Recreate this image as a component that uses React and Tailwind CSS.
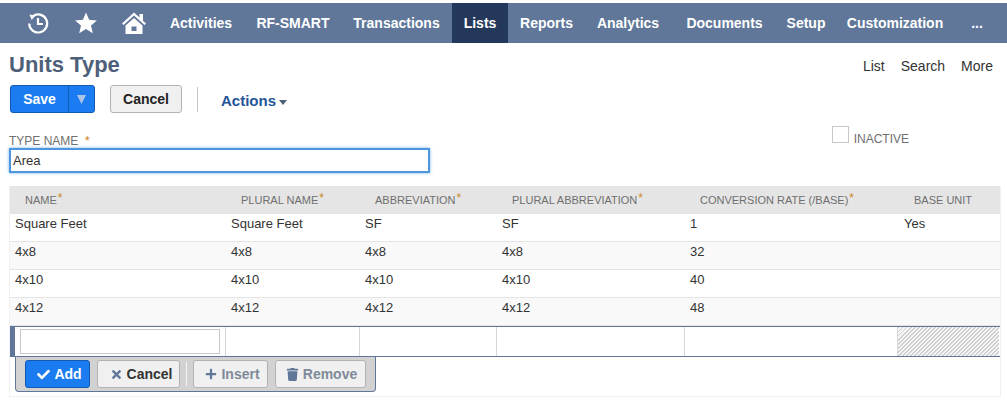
import React from "react";
import { FaCheck, FaTimes, FaPlus, FaTrash } from "react-icons/fa";

const cols = ["w-[216px]", "w-[134px]", "w-[137px]", "w-[188px]", "w-[213px]", "w-[102px]"];
const headers = [
  ["NAME", true, "pl-[15px]"],
  ["PLURAL NAME", true, "pl-[15px]"],
  ["ABBREVIATION", true, "pl-[15px]"],
  ["PLURAL ABBREVIATION", true, "pl-[15px]"],
  ["CONVERSION RATE (/BASE)", true, "pl-[15px]"],
  ["BASE UNIT", false, "pl-[16px]"],
];
const rows = [
  ["Square Feet", "Square Feet", "SF", "SF", "1", "Yes"],
  ["4x8", "4x8", "4x8", "4x8", "32", ""],
  ["4x10", "4x10", "4x10", "4x10", "40", ""],
  ["4x12", "4x12", "4x12", "4x12", "48", ""],
];
const nav = [
  ["Activities", "w-[88px]"],
  ["RF-SMART", "w-[96px]"],
  ["Transactions", "w-[111px]"],
  ["Lists", "w-[56px] bg-[#24385b]"],
  ["Reports", "w-[77px]"],
  ["Analytics", "w-[86px]"],
  ["Documents", "w-[107px]"],
  ["Setup", "w-[56px]"],
  ["Customization", "w-[122px]"],
];

function Star() {
  return <span className="text-[#cc8a1e] text-[12px] leading-none">*</span>;
}

export default function App() {
  return (
    <div className="w-[1007px] h-[410px] overflow-hidden bg-white pt-[3px] font-['Liberation_Sans',Arial,sans-serif] text-[#333]">
      <nav className="h-10 bg-[#607799] flex items-stretch pl-[17px] text-white text-[14px] font-bold">
        <div className="flex items-center w-[140px] shrink-0 text-white">
          <svg width="24" height="24" viewBox="0 0 24 24" className="ml-[9px]" fill="none" stroke="currentColor" strokeWidth="2.2">
            <path d="M6.5 5.5A9 9 0 1 1 3.2 12.5" />
            <path d="M3.5 3.5l6 1-3.8 4.400z" fill="currentColor" stroke="none" />
            <path d="M12 7v6h5" />
          </svg>
          <svg width="24" height="24" viewBox="0 0 24 24" className="ml-[24px]" fill="currentColor">
            <path d="M12 1.500l3.100 7.200 7.800.7-5.900 5.100 1.800 7.700L12 18.100l-6.800 4.100 1.800-7.700L1.100 9.400l7.800-.7z" />
          </svg>
          <svg width="26" height="24" viewBox="0 0 26 24" className="ml-[23px]" fill="currentColor">
            <path d="M13 1.500L1 12.500l1.500 1.600L13 4.600l10.500 9.500L25 12.500l-3-2.800V3h-3.500v3.500z" />
            <path d="M13 7L4.500 14.500V23h17v-8.500zM10.500 15.500h5V20h-5z" fillRule="evenodd" />
          </svg>
        </div>
        {nav.map(([t, c]) => (
          <div key={t} className={`flex items-center justify-center shrink-0 ${c}`}>{t}</div>
        ))}
        <div className="flex items-center justify-center w-[42px] shrink-0">...</div>
      </nav>

      <div className="flex items-start justify-between pl-[9px] pr-[14px] h-[42px]">
        <h1 className="text-[22px] leading-[25px] mt-[9px] font-bold text-[#4d5f79]">Units Type</h1>
        <div className="flex gap-[16px] text-[14px] leading-4 mt-[15px] text-[#333]">
          <span>List</span>
          <span>Search</span>
          <span>More</span>
        </div>
      </div>

      <div className="flex items-center pl-[10px] h-[28px]">
        <div className="flex h-[28px] w-[85px] rounded-[3px] border border-[#125ab2] bg-[#1a7cf0] text-white text-[14px] font-bold overflow-hidden">
          <div className="w-[58px] flex items-center justify-center border-r border-[#125ab2]">Save</div>
          <div className="flex-1 flex items-center justify-center text-[#a9c4e6]">
            <svg width="9" height="9" viewBox="0 0 9 9" fill="currentColor"><path d="M0 0h9L4.500 9z" /></svg>
          </div>
        </div>
        <div className="ml-[15px] h-[28px] w-[72px] flex items-center justify-center rounded-[3px] border border-[#b2b2b2] bg-[#f0f0f0] text-[14px] font-bold text-[#222]">Cancel</div>
        <div className="ml-[15px] h-[25px] w-px bg-[#c8c8c8]" />
        <div className="ml-[23px] mt-[5px] flex items-center text-[15px] font-bold text-[#255599]">
          Actions
          <svg width="8" height="5" viewBox="0 0 8 5" className="ml-[3px] mt-[2px]" fill="#4d5f79"><path d="M0 0h8L4 5z" /></svg>
        </div>
      </div>

      <div className="flex items-start justify-between h-[73px] pl-[9px]">
        <div className="mt-[21px]">
          <div className="text-[12px] leading-[14px] text-[#6f6f6f]">
            TYPE NAME <span className="text-[#cc8a1e] text-[13px] ml-[3px]">*</span>
          </div>
          <div className="h-[25px] w-[421px] border-2 border-[#4d95dd] shadow-[0_0_3px_#7fb5ea] bg-white flex items-center pl-[2px] text-[13px] text-[#333]">Area</div>
        </div>
        <div className="flex items-start mr-[98px] mt-[13px]">
          <div className="w-[17px] h-[17px] border border-[#c8c8c8]" />
          <span className="ml-[5px] mt-[6px] text-[12px] leading-[14px] text-[#6f6f6f]">INACTIVE</span>
        </div>
      </div>

      <div className="ml-[9px] w-[992px] border-x border-b border-[#f0f0f0] h-[211px]">
        <div className="flex h-[28px] bg-[#e5e5e5] text-[11px] text-[#6f6f6f]">
          {headers.map(([t, s, p], i) => (
            <div key={t} className={`flex items-center shrink-0 ${cols[i]} ${p}`}>
              {t}{s && <span className="ml-[1px] -mt-[3px]"><Star /></span>}
            </div>
          ))}
        </div>
        {rows.map((r, ri) => (
          <div key={ri} className={`flex h-[28px] border-b border-[#e5e5e5] text-[13px] text-[#333] ${ri % 2 ? "bg-[#f9f9f9]" : "bg-white"}`}>
            {r.map((v, i) => (
              <div key={i} className={`shrink-0 pt-[2px] leading-[15px] ${i === 5 ? "pl-[6px]" : "pl-[5px]"} ${cols[i]}`}>{v}</div>
            ))}
          </div>
        ))}
        <div className="relative flex h-[31px] border-y border-[#607799]">
          <div className="w-[5px] bg-[#607799] -my-px shrink-0" />
          <div className="w-[210px] shrink-0 pl-[5px] pt-[2px]">
            <div className="w-[200px] h-[25px] border border-[#c8c8c8] bg-white" />
          </div>
          <div className={`${cols[1]} shrink-0 border-l border-[#d8d8d8]`} />
          <div className={`${cols[2]} shrink-0 border-l border-[#d8d8d8]`} />
          <div className={`${cols[3]} shrink-0 border-l border-[#d8d8d8]`} />
          <div className={`${cols[4]} shrink-0 border-l border-[#d8d8d8]`} />
          <div className={`${cols[5]} shrink-0 border-l border-[#d8d8d8] bg-[repeating-linear-gradient(135deg,#d0d0d0_0,#d0d0d0_1.41px,#f6f6f6_1.41px,#f6f6f6_2.83px)]`} />
        </div>
        <div className="ml-[5px] w-[361px] h-[35px] bg-[#d2d2d2] border-x border-b border-[#607799] rounded-b-[4px] flex items-center pl-[9px] text-[14px] font-bold">
          <div className="w-[65px] h-[28px] rounded-[3px] bg-[#1a7cf0] border border-[#125ab2] text-white flex items-center justify-center gap-[4px] pl-[4px]">
            <FaCheck size={13} />Add
          </div>
          <div className="ml-[7px] w-[83px] h-[28px] rounded-[3px] bg-[#f0f0f0] border border-[#b2b2b2] text-[#333] flex items-center justify-center gap-[4px] pl-[5px]">
            <FaTimes size={13} className="text-[#607799]" />Cancel
          </div>
          <div className="ml-[6px] w-px h-[24px] bg-[#f4f4f4]" />
          <div className="ml-[6px] w-[75px] h-[28px] rounded-[3px] bg-[#f0f0f0] border border-[#b2b2b2] text-[#7f8a99] flex items-center justify-center gap-[4px] pl-[4px]">
            <FaPlus size={12} className="text-[#607799]" />Insert
          </div>
          <div className="ml-[7px] w-[91px] h-[28px] rounded-[3px] bg-[#f0f0f0] border border-[#b2b2b2] text-[#7f8a99] flex items-center justify-center gap-[4px] pl-[2px]">
            <FaTrash size={13} className="text-[#607799]" />Remove
          </div>
        </div>
      </div>
    </div>
  );
}
